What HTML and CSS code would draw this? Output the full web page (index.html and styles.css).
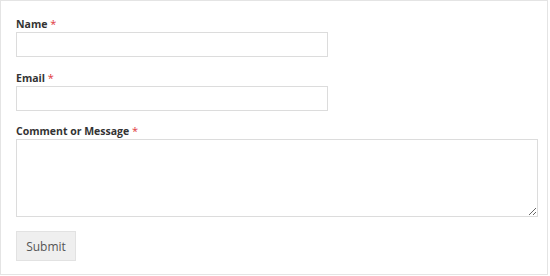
FILE: index.html
```html
<!DOCTYPE html>
<html>
<head>
<meta charset="utf-8">
<link rel="stylesheet" href="styles.css">
</head>
<body>
<form class="frame">
  <div class="field">
    <label class="label">Name <span class="req">*</span></label>
    <input class="input" type="text">
  </div>
  <div class="field field-tight">
    <label class="label">Email <span class="req">*</span></label>
    <input class="input" type="text">
  </div>
  <div class="field field-last">
    <label class="label">Comment or Message <span class="req">*</span></label>
    <textarea class="textarea"></textarea>
  </div>
  <button class="submit" type="button">Submit</button>
</form>
</body>
</html>
```
FILE: styles.css
```css
html, body {
  margin: 0;
  padding: 0;
  background: #fff;
}
.frame {
  box-sizing: border-box;
  width: 548px;
  height: 275px;
  border: 1px solid #e4e4e4;
  padding: 15px 0 0 15px;
  display: flex;
  flex-direction: column;
  font-family: "Open Sans", sans-serif;
}
.field {
  display: flex;
  flex-direction: column;
  margin-bottom: 13px;
}
.field-tight {
  margin-bottom: 12px;
}
.field-last {
  margin-bottom: 14px;
}
.label {
  font-size: 10.5px;
  font-weight: 700;
  color: #333;
  line-height: 16px;
}
.req {
  color: #e0373c;
  font-weight: 400;
  font-size: 11px;
}
.input {
  box-sizing: border-box;
  width: 312px;
  height: 25px;
  border: 1px solid #dcdcdc;
  margin: 0;
  padding: 0 6px;
  background: #fff;
}
.textarea {
  box-sizing: border-box;
  width: 522px;
  height: 78px;
  border: 1px solid #dcdcdc;
  margin: 0;
  padding: 6px;
  background: #fff;
  resize: vertical;
  display: block;
}
.submit {
  box-sizing: border-box;
  align-self: flex-start;
  width: 60px;
  height: 30px;
  border: 1px solid #e2e2e2;
  background: #efefef;
  color: #555;
  font-family: "Open Sans", sans-serif;
  font-size: 12px;
  padding: 0;
}
```
